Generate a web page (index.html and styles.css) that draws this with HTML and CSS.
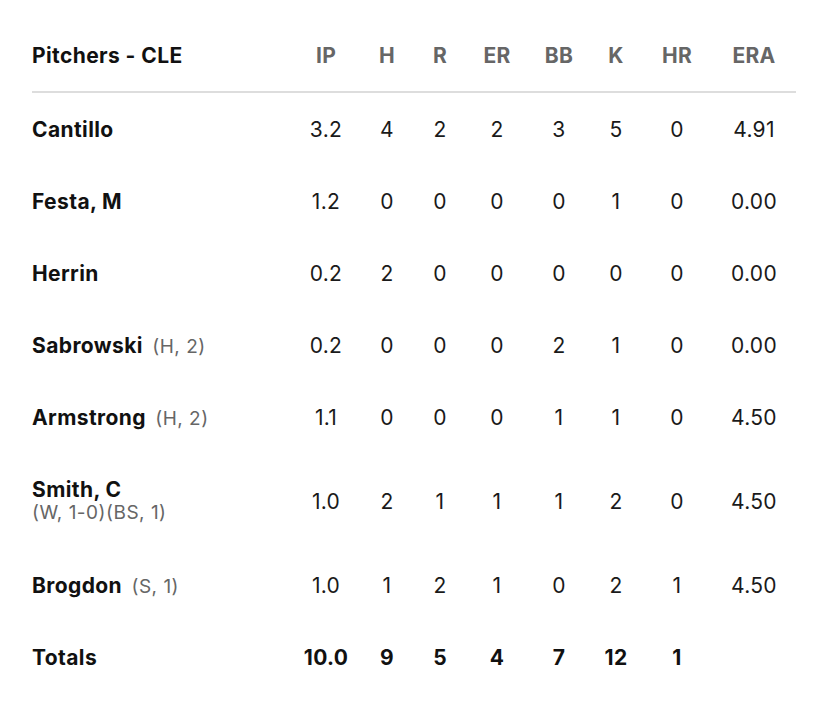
FILE: index.html
```html
<!DOCTYPE html>
<html>
<head>
<meta charset="utf-8">
<link rel="stylesheet" href="styles.css">
</head>
<body>
<div class="box">
  <div class="row head">
    <div class="name">Pitchers - CLE</div>
    <div>IP</div><div>H</div><div>R</div><div>ER</div><div>BB</div><div>K</div><div>HR</div><div>ERA</div>
  </div>
  <div class="row">
    <div class="name">Cantillo</div>
    <div>3.2</div><div>4</div><div>2</div><div>2</div><div>3</div><div>5</div><div>0</div><div>4.91</div>
  </div>
  <div class="row">
    <div class="name">Festa, M</div>
    <div>1.2</div><div>0</div><div>0</div><div>0</div><div>0</div><div>1</div><div>0</div><div>0.00</div>
  </div>
  <div class="row">
    <div class="name">Herrin</div>
    <div>0.2</div><div>2</div><div>0</div><div>0</div><div>0</div><div>0</div><div>0</div><div>0.00</div>
  </div>
  <div class="row">
    <div class="name">Sabrowski <span class="note">(H, 2)</span></div>
    <div>0.2</div><div>0</div><div>0</div><div>0</div><div>2</div><div>1</div><div>0</div><div>0.00</div>
  </div>
  <div class="row">
    <div class="name">Armstrong <span class="note">(H, 2)</span></div>
    <div>1.1</div><div>0</div><div>0</div><div>0</div><div>1</div><div>1</div><div>0</div><div>4.50</div>
  </div>
  <div class="row tall">
    <div class="name stack">Smith, C<span class="note">(W, 1-0)(BS, 1)</span></div>
    <div>1.0</div><div>2</div><div>1</div><div>1</div><div>1</div><div>2</div><div>0</div><div>4.50</div>
  </div>
  <div class="row">
    <div class="name">Brogdon <span class="note">(S, 1)</span></div>
    <div>1.0</div><div>1</div><div>2</div><div>1</div><div>0</div><div>2</div><div>1</div><div>4.50</div>
  </div>
  <div class="row total">
    <div class="name">Totals</div>
    <div>10.0</div><div>9</div><div>5</div><div>4</div><div>7</div><div>12</div><div>1</div><div></div>
  </div>
</div>
</body>
</html>
```
FILE: styles.css
```css
html, body {
  margin: 0;
  padding: 0;
  background: #fff;
}
body {
  font-family: Inter, "Liberation Sans", sans-serif;
  color: #1a1a1a;
}
.box {
  padding: 19px 32px 0 32px;
}
.row {
  display: grid;
  grid-template-columns: 260px 68px 54px 52px 62px 62px 52px 70px 84px;
  height: 72px;
  align-items: center;
  font-size: 21px;
  letter-spacing: 0.3px;
  text-align: center;
}
.row.tall {
  height: 96px;
}
.row .name {
  text-align: left;
  font-weight: 700;
  color: #111;
  white-space: nowrap;
  letter-spacing: 0.4px;
}
.head {
  border-bottom: 2px solid #dddddd;
  color: #666;
  font-weight: 700;
  height: 72px;
}
.head .name {
  color: #111;
}
.note {
  font-weight: 400;
  font-size: 19px;
  letter-spacing: 0.5px;
  color: #666;
  margin-left: 4px;
}
.stack {
  display: flex;
  flex-direction: column;
  line-height: 23px;
}
.stack .note {
  margin-left: 0;
}
.total {
  font-weight: 700;
  color: #111;
}
```
